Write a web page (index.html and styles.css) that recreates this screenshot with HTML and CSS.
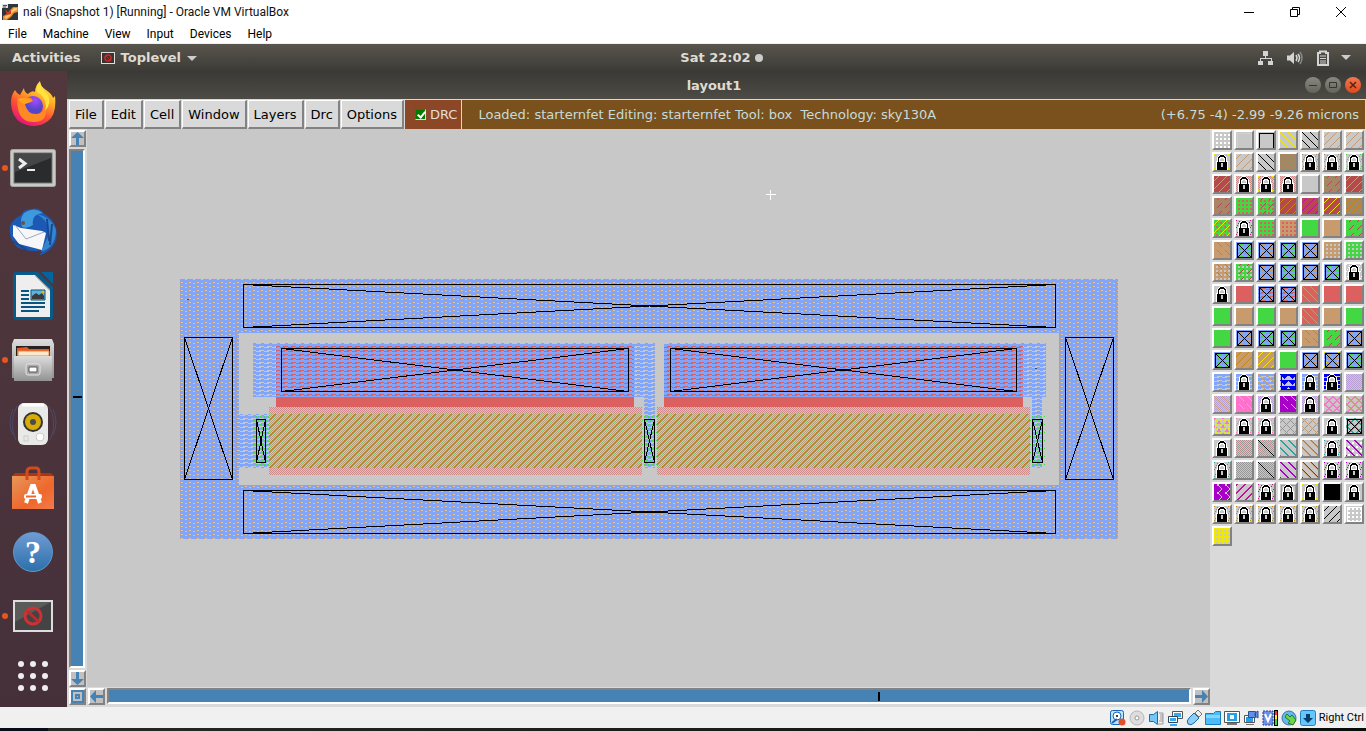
FILE: index.html
```html
<!DOCTYPE html>
<html lang="en">
<head>
<meta charset="utf-8">
<title>nali (Snapshot 1) [Running] - Oracle VM VirtualBox</title>
<link rel="stylesheet" href="styles.css">
</head>
<body>
<div class="vm">
  <header class="vm-title">
    <svg class="vm-logo" width="16" height="16" viewBox="0 0 16 16"><rect width="16" height="16" fill="#30343c"/><path d="M1 16V12L5 10L8 6L11 3H16V8L12 9L9 13L5 16Z" fill="#e8862c"/><path d="M2 13L6 11L9 7L12 4H15V6L11 8L8 12L4 15Z" fill="#ffc36b"/><path d="M3 5L6 8L9 6V10L5 11Z" fill="#d43a1c"/><rect width="6" height="4" fill="#ddd"/><path d="M1 1.500h4M1 3h3" stroke="#555"/></svg>
    <h1 class="vm-name">nali (Snapshot 1) [Running] - Oracle VM VirtualBox</h1>
    <div class="vm-controls">
      <button class="vm-control" aria-label="Minimize"><svg width="12" height="12"><path d="M1 6.500h10" stroke="#000"/></svg></button>
      <button class="vm-control" aria-label="Restore"><svg width="12" height="12" fill="none" stroke="#000"><path d="M1.500 3.500h7v7h-7zM3.500 3V1.500h7v7H9"/></svg></button>
      <button class="vm-control" aria-label="Close"><svg width="12" height="12"><path d="M1 1L11 11M11 1L1 11" stroke="#000"/></svg></button>
    </div>
  </header>
  <nav class="vm-menu">
    <button>File</button><button>Machine</button><button>View</button><button>Input</button><button>Devices</button><button>Help</button>
  </nav>

  <div class="topbar">
    <div class="topbar-left">
      <button class="topbar-item">Activities</button>
      <button class="topbar-item app-item"><svg width="14" height="12"><rect x=".5" y=".5" width="13" height="11" fill="#3a3330" stroke="#ddd"/><circle cx="7" cy="6" r="3" fill="none" stroke="#c22d2d" stroke-width="1.500"/><path d="M5 4l4 4" stroke="#c22d2d"/></svg>Toplevel<svg width="10" height="6"><path d="M0 0h10L5 5z" fill="#ccc"/></svg></button>
    </div>
    <button class="topbar-item clock">Sat 22:02<span class="dot"></span></button>
    <div class="topbar-right">
      <svg width="16" height="16" fill="#d4d4d4"><path d="M5 1h5v5H8v2h6v3h1v4h-5v-4h3V9H3v2h2v4H0v-4h2V8h5V6H5z"/></svg>
      <svg width="16" height="16"><path d="M0 5.500h3L7 2v12L3 10.500H0z" fill="#d4d4d4"/><path d="M9 5q2 3 0 6M11 4q3 4 0 8" fill="none" stroke="#d4d4d4" stroke-width="1.500"/><path d="M13 2q4 6 0 12" fill="none" stroke="#888" stroke-width="1.500"/></svg>
      <svg width="16" height="16"><path d="M4 3V1.500h6V3h2v12H2V3z" fill="none" stroke="#d4d4d4" stroke-width="2"/><path d="M4 6h6M4 8.500h6M4 11h6M4 13h6" stroke="#d4d4d4"/></svg>
      <svg class="menu-arrow" width="10" height="6"><path d="M0 0h10L5 5z" fill="#ccc"/></svg>
    </div>
  </div>

  <div class="desktop">
    <aside class="dock">
      <button class="dock-item" aria-label="Firefox"><svg width="46" height="46" viewBox="0 0 46 46">
        <defs><linearGradient id="ff" x1=".8" y1="0" x2=".3" y2="1"><stop offset="0" stop-color="#fff44f"/><stop offset=".35" stop-color="#ffae27"/><stop offset=".65" stop-color="#ff4f34"/><stop offset="1" stop-color="#e3117f"/></linearGradient><radialGradient id="fp" cx=".6" cy=".2"><stop offset="0" stop-color="#a74bff"/><stop offset="1" stop-color="#5446c8"/></radialGradient></defs>
        <path d="M5 9q2 4 5 5L14 7q0 4 4 6q4-4 7-2Q25 5 30 0q0 5 6 9t7 8l2-2q2 18-7 25T17 44T2 29T5 9Z" fill="url(#ff)"/><circle cx="23" cy="25" r="10" fill="url(#fp)"/><path d="M7 19q8-4 14-2l2 3q-4 2-8 3q2 10 11 10q7 0 9-8q4 15-10 16T8 28z" fill="#ff8a24"/><path d="M7 18q8-3 15 2q-4 2-8 3q-3-1-7-5" fill="#ffa31f"/><path d="M30 1q-7 9 0 12q8 6 5 17q7-8 3-16Q31 8 30 1Z" fill="#ffe23d"/></svg></button>
      <button class="dock-item running" aria-label="Terminal"><svg width="46" height="38"><rect x=".5" y=".5" width="45" height="37" rx="2" fill="#c9c9c6" stroke="#a6a6a2"/><rect x="4" y="4" width="38" height="30" fill="#292b2c" stroke="#777"/><path d="M5 5h36v4L5 23z" fill="#444648"/><path d="M9 10l6 4.500L9 19" fill="none" stroke="#eee" stroke-width="3"/><path d="M17 21h8" stroke="#eee" stroke-width="2"/></svg></button>
      <button class="dock-item" aria-label="Thunderbird"><svg width="48" height="48"><path d="M12 7Q14 1 23 1Q31-1 34 5Q43 9 47 20Q50 34 40 42q-5 5-10 5l5-5Q20 45 8 39Q-1 30 1 18Q3 12 12 7Z" fill="#1b59b5"/><path d="M15 5Q25-2 34 5q-12 1-10 12q-6 4-11 2Q10 11 15 5Z" fill="#3f99dd"/><path d="M4 17L12 20L33 23L37 25L33 42L10 36L4 28Z" fill="#f7f7fa"/><path d="M6 17L17 31L35 24" fill="none" stroke="#9da9b9"/><path d="M27 6q13 6 13 20l-8 18q15-5 15-22Q42 8 27 6" fill="#3485ce"/><path d="M38 11l2 22M43 16l-2 21M4 33l14 9" stroke="#174891" stroke-width="2"/><circle cx="14" cy="15" r="2" fill="#6d5148"/></svg></button>
      <button class="dock-item" aria-label="LibreOffice Writer"><svg width="40" height="48"><path d="M3 0H25L40 15V45q0 3-3 3H3q-3 0-3-3V3Q0 0 3 0" fill="#065b8c"/><path d="M3 3H22L37 18V45H3Z" fill="#eee"/><path d="M22 3V4L37 19V17Z" fill="#999"/><path d="M28 0h12v12z" fill="#05649d"/><path d="M8 19h8M8 23h8M8 27h8M8 31h24M8 35h24M8 39h18" stroke="#075581" stroke-width="2"/><path d="M18 18h14v10H18z" fill="#63b1da" stroke="#075581"/><path d="M19 27v-3l4-3 3 2 3-2 2 3v3z" fill="#373d3d"/><circle cx="30" cy="20" r="1.500" fill="#e3b525"/></svg></button>
      <button class="dock-item running" aria-label="Files"><svg width="42" height="44"><defs><linearGradient id="cab" x2="0" y2="1"><stop stop-color="#ddd"/><stop offset="1" stop-color="#929292"/></linearGradient></defs><path d="M2 1h38l2 5v34H0V6z" fill="url(#cab)"/><path d="M4 8h34v10H4z" fill="#292120"/><path d="M5 10l10-1 2 2h20v7H5z" fill="#e2572b"/><path d="M6 13h31v5H6z" fill="#ffe8c9" stroke="#e48534"/><path d="M2 18h38v25H2z" fill="url(#cab)"/><rect x="14" y="26" width="14" height="11" rx="2" fill="#aaa" stroke="#e6e6e6"/><path d="M17 29h8v5h-8z" fill="#fff" stroke="#555"/></svg></button>
      <button class="dock-item" aria-label="Rhythmbox"><svg width="48" height="46"><path d="M8 5q-9 17-1 34M4 8Q-2 22 4 34M40 5q9 17 1 34M44 8q6 14 0 26" fill="none" stroke="#4c4a66"/><rect x="9" y="2" width="30" height="42" rx="6" fill="#e9e9e7"/><path d="M13 4h22" stroke="#fff" stroke-width="3"/><circle cx="24" cy="21" r="10" fill="#333"/><circle cx="24" cy="21" r="8" fill="#d7ac09"/><circle cx="24" cy="21" r="3" fill="#4b4b48"/><circle cx="31" cy="36" r="4" fill="#fff" stroke="#ccc"/><rect x="15" y="35" width="4" height="5" fill="none" stroke="#ccc"/></svg></button>
      <button class="dock-item" aria-label="Ubuntu Software"><svg width="42" height="44"><defs><linearGradient id="bag" x2="1" y2="1"><stop stop-color="#e7975b"/><stop offset=".6" stop-color="#ef672b"/><stop offset="1" stop-color="#f37b4a"/></linearGradient></defs><path d="M0 10l3-3h36l3 3z" fill="#ad3514"/><path d="M0 10h42v33H0z" fill="url(#bag)"/><path d="M15 14V6q0-4 4-4h5q3 0 3 4v8" fill="none" stroke="#d44b19" stroke-width="3"/><path d="M14 37l6-17h2l6 17" fill="none" stroke="#fff" stroke-width="4"/><rect x="12" y="28" width="18" height="5" rx="2" fill="#fff"/><path d="M14 30.500h10" stroke="#ee682d" stroke-width="2"/></svg></button>
      <button class="dock-item help" aria-label="Help"><span>?</span></button>
      <button class="dock-item running" aria-label="Toplevel"><svg width="40" height="32"><rect x="1" y="1" width="38" height="30" fill="#444" stroke="#ddd" stroke-width="2"/><path d="M2 2h36L2 22z" fill="#5b5b59"/><circle cx="20" cy="16" r="8" fill="none" stroke="#d13132" stroke-width="3"/><path d="M14 11l12 11" stroke="#bd2b2d" stroke-width="3"/></svg></button>
      <button class="dock-item apps" aria-label="Show applications"><svg width="30" height="30" fill="#eee"><circle cx="3" cy="3" r="3"/><circle cx="15" cy="3" r="3"/><circle cx="27" cy="3" r="3"/><circle cx="3" cy="15" r="3"/><circle cx="15" cy="15" r="3"/><circle cx="27" cy="15" r="3"/><circle cx="3" cy="27" r="3"/><circle cx="15" cy="27" r="3"/><circle cx="27" cy="27" r="3"/></svg></button>
    </aside>

    <main class="window">
      <div class="window-title">
        <h2>layout1</h2>
        <div class="window-controls">
          <button aria-label="Minimize window"><svg width="10" height="10"><path d="M1 5.500h8" stroke="#35342f"/></svg></button>
          <button aria-label="Maximize window"><svg width="10" height="10"><path d="M1.500 2.500h7v5h-7z" fill="none" stroke="#35342f"/></svg></button>
          <button class="close" aria-label="Close window"><svg width="10" height="10"><path d="M2 2l6 6M8 2l-6 6" stroke="#5b2413" stroke-width="1.500"/></svg></button>
        </div>
      </div>
      <div class="toolbar">
        <button>File</button><button>Edit</button><button>Cell</button><button>Window</button><button>Layers</button><button>Drc</button><button>Options</button>
        <label class="drc"><input type="checkbox" checked>DRC</label>
        <div class="status"><span>Loaded: starternfet Editing: starternfet Tool: box&nbsp; Technology: sky130A</span><span>(+6.75 -4) -2.99 -9.26 microns</span></div>
      </div>
      <div class="workspace">
        <div class="vscroll">
          <button class="arrow" aria-label="Scroll up"><svg width="13" height="13"><path d="M6.500 0L13 6H8v7H5V6H0z"/></svg></button>
          <div class="trough"><span class="mark"></span></div>
          <button class="arrow" aria-label="Scroll down"><svg width="13" height="13"><path d="M6.500 13L13 7H8V0H5v7H0z"/></svg></button>
        </div>
        <div class="canvas">
          <svg id="layout" viewBox="87 129 1123 558">
            <defs id="stipples"></defs>
            <path d="M180 279H1118V539H180ZM239 333V485H1059V333Z" fill="url(#ring)" fill-rule="evenodd"/>
            <path d="M276 345H634V407H276ZM664 345H1023V407H664Z" fill="#dc6060"/>
            <path d="M253 343H655V397H253ZM664 343H1046V397H664ZM644 397H655V468H644ZM1032 397H1042V468H1032ZM239 414H269V468H239Z" fill="url(#m1)"/>
            <path d="M269 407H642V475H269ZM657 407H1030V475H657Z" fill="url(#poly)"/>
            <path d="M253 414H269V468H253ZM642 414H657V468H642ZM1030 414H1046V468H1030Z" fill="url(#diff)"/>
            <path d="M269 414H642V468H269ZM657 414H1030V468H657Z" fill="#c8c8c8"/>
            <path d="M269 414H642V468H269ZM657 414H1030V468H657Z" fill="url(#gate)"/>
            <path d="M269 414H642V468H269ZM657 414H1030V468H657Z" fill="url(#nfet)"/>
            <path d="M269 414H642V468H269ZM657 414H1030V468H657Z" fill="url(#channel)"/>
            <g id="contacts" fill="none" stroke="#000" shape-rendering="crispEdges"></g>
            <path d="M187 299h2v1h-2zM1035 368h2v1h-2z" fill="#245185"/>
            <path d="M766 194.500h10M770.500 190v10" stroke="#fff"/>
          </svg>
        </div>
        <div class="palette" id="palette"></div>
        <button class="arrow corner" aria-label="Zoom to fit"><svg width="13" height="13"><path d="M0 0h13v13H0zM2 2v9h9V2z" fill-rule="evenodd"/><path d="M4 4h5v5H4zM6 6v1h1V6z" fill-rule="evenodd"/></svg></button>
        <div class="hscroll">
          <button class="arrow" aria-label="Scroll left"><svg width="13" height="13"><path d="M0 6.500L6 0v5h7v3H6v5z"/></svg></button>
          <div class="trough"><span class="mark"></span></div>
          <button class="arrow" aria-label="Scroll right"><svg width="13" height="13"><path d="M13 6.500L7 0v5H0v3h7v5z"/></svg></button>
        </div>
      </div>
    </main>
  </div>

  <footer class="vm-status">
    <svg width="16" height="16"><rect x=".5" y=".5" width="13" height="14" rx="2" fill="#bfe3fb" stroke="#1765b5"/><circle cx="7" cy="6" r="4" fill="#fff" stroke="#1765b5"/><circle cx="7" cy="6" r="1"/><path d="M2 13l5-4" stroke="#1765b5" stroke-width="2"/><circle cx="12" cy="12" r="3.500" fill="#e0502c"/></svg>
    <svg width="16" height="16"><circle cx="8" cy="8" r="7" fill="#ddd" stroke="#b5b5b5"/><circle cx="8" cy="8" r="2" fill="#fff" stroke="#999"/></svg>
    <svg width="16" height="16"><path d="M1.500 4.500h4l4-3v13l-4-3h-4z" fill="#75c8f6" stroke="#176ba9"/><path d="M11 3h4v11h-6M12 5h3M12 7h3M12 9h3M11 11h4" fill="none" stroke="#999"/></svg>
    <svg width="16" height="16"><path d="M5.500 1.500h10v7h-10z" fill="#fff" stroke="#555"/><path d="M7 3h7v4H7z" fill="#36aaf0"/><path d="M1.500 6.500h9v6h-9z" fill="#fff" stroke="#345"/><path d="M3 8h6v3H3zM3 14h7v2H3z" fill="#36aaf0"/></svg>
    <svg width="16" height="16"><path d="M2 14q-2-3 1-6l5-5 5 5-5 5q-3 3-6 1" fill="#8dccf5" stroke="#176bb5"/><path d="M9 3l3-3 4 4-3 3z" fill="#eee" stroke="#777"/></svg>
    <svg width="16" height="16"><path d="M.5 3.500h8l2-2h5v13H.500z" fill="#4bbcf8" stroke="#167dc1"/><path d="M1 5h14v3H1z" fill="#83d6ff"/></svg>
    <svg width="16" height="16"><path d="M.5 1.500h15v11H.500z" fill="#fff" stroke="#555"/><path d="M3 3h10v8H3z" fill="#259fe3"/><path d="M6 5h4v4H6z" fill="#eaf8ff"/><path d="M3 13h10v2H3z" fill="#777"/></svg>
    <svg width="16" height="16"><path d="M1.500 5.500h10v7h-10z" fill="#fff" stroke="#555"/><path d="M3 7h7v5H3z" fill="#259fe3"/><path d="M5.500 1.500h7v6h-7zM12 3l3-2v7l-3-2z" fill="#668ee1" stroke="#29519f"/><path d="M3 14h8v1H3z" fill="#777"/></svg>
    <svg width="16" height="16"><rect x="1" y="1" width="10" height="14" fill="#6991e5" stroke="#2f3c9c" stroke-dasharray="2 1"/><path d="M3 4l3 7 3-7" fill="none" stroke="#fff" stroke-width="2"/><path d="M12 0h4v16h-4z"/><path d="M13 1h2v4h-2z" fill="#f33"/><path d="M13 5h2v4h-2z" fill="#fe2"/><path d="M13 9h2v6h-2z" fill="#3d3"/></svg>
    <svg width="16" height="16"><circle cx="8" cy="8" r="7" fill="#64b7ef" stroke="#3877ac"/><path d="M6 4l3 3 2-2 4 5-3 5-5-2 2-2-5-4z" fill="#6bd64c" stroke="#247b20"/></svg>
    <svg width="16" height="16"><rect x=".5" y=".5" width="15" height="15" rx="2" fill="#64c6fb" stroke="#2280bf"/><path d="M6 4h4v4h3l-5 5-5-5h3z" fill="#063d6b"/></svg>
    <span>Right Ctrl</span>
  </footer>
  <div class="taskbar-edge"></div>
</div>
<script src="app.js"></script>
</body>
</html>
```
FILE: styles.css
```css
* { box-sizing: border-box; }
body { margin: 0; background: #000; overflow: hidden; }
button { font: inherit; color: inherit; background: none; border: 0; padding: 0; margin: 0; }
h1, h2 { margin: 0; font: inherit; }
svg { display: block; flex: none; }

.vm { display: flex; flex-direction: column; height: 100vh; font-family: Roboto, sans-serif; font-size: 12px; }
.vm-title { display: flex; align-items: center; height: 23px; padding: 0 2px; gap: 5px; background: #fff; }
.vm-name { flex: 1; color: #111; }
.vm-controls { display: flex; }
.vm-control { width: 46px; height: 20px; display: grid; place-items: center; }
.vm-menu { display: flex; height: 21px; padding: 2px 0 0 8px; gap: 16px; background: #fff; border-bottom: 1px solid #f0f0f0; color: #000; }

.topbar { display: grid; grid-template-columns: 1fr auto 1fr; align-items: center; height: 27px; padding: 0 15px 0 12px; background: linear-gradient(#58554c, #3c3b37); color: #dfdbd2; font: bold 13px "DejaVu Sans", sans-serif; }
.topbar-left, .topbar-right { display: flex; align-items: center; }
.topbar-left { gap: 20px; }
.topbar-right { justify-content: flex-end; gap: 13px; }
.topbar-item { display: flex; align-items: center; gap: 6px; white-space: nowrap; }
.clock { gap: 4px; padding-left: 80px; }
.app-item svg:last-child { margin-top: 2px; }
.menu-arrow { margin-left: -4px; }
.dot { width: 8px; height: 8px; border-radius: 50%; background: #ccc; }

.desktop { flex: 1; display: flex; min-height: 0; }
.dock { width: 67px; flex: none; padding: 1px 1px 0 0; background: linear-gradient(#52383d, #45303a); display: flex; flex-direction: column; }
.dock-item { position: relative; height: 64px; display: grid; place-items: center; }
.dock-item.apps { height: 55px; }
.running::before { content: ""; position: absolute; left: 2px; top: 29px; width: 6px; height: 6px; border-radius: 50%; background: #e95420; }
.help span { width: 40px; height: 40px; border-radius: 50%; border: 1px solid #6398ce; background: linear-gradient(#6e9bd3, #2d70ab); color: #fff; font: bold 32px/38px "Liberation Serif", serif; text-align: center; }

.window { flex: 1; display: flex; flex-direction: column; min-width: 0; background: #d9d9d9; font-family: "DejaVu Sans", sans-serif; font-size: 13px; }
.window-title { display: grid; grid-template-columns: 1fr auto 1fr; align-items: center; height: 28px; padding-right: 5px; background: linear-gradient(#3a3935, #4d4b45); color: #dfdbd2; font-weight: bold; }
.window-title h2 { grid-column: 2; }
.window-controls { display: flex; justify-content: flex-end; gap: 4px; }
.window-controls button { width: 16px; height: 16px; border-radius: 50%; display: grid; place-items: center; background: linear-gradient(#8a8880, #65635c); }
.window-controls .close { background: linear-gradient(#f37750, #df4a1b); }

.toolbar { display: flex; gap: 1px; height: 30px; padding: 1px 1px 0 2px; background: #d9d9d9; }
.toolbar button { padding: 0 5px; background: #d9d9d9; border: solid; border-color: #fff #828282 #828282 #fff; color: #000; white-space: nowrap; border-width: 1px 2px 2px 1px; }
.drc { display: flex; align-items: center; gap: 4px; padding: 0 4px 0 10px; background: #8b4726; color: #e5dfda; }
.drc input { appearance: none; width: 11px; height: 11px; margin: 0; background: #007d00; border: 1px solid; border-color: #555 #ddd #ddd #555; position: relative; }
.drc input::after { content: ""; position: absolute; left: 3px; top: 0; width: 3px; height: 6px; border: solid #fff; border-width: 0 2px 2px 0; transform: rotate(40deg); }
.status { flex: 1; display: flex; align-items: center; justify-content: space-between; padding: 0 6px 0 16px; background: #7a501d; color: #c4dcdc; white-space: nowrap; min-width: 0; }

.workspace { flex: 1; min-height: 0; display: grid; grid-template-columns: 20px 1fr 156px; grid-template-rows: 1fr 20px; }
.vscroll { display: flex; flex-direction: column; gap: 1px; padding: 1px 1px 0 2px; }
.hscroll { display: flex; gap: 1px; padding: 1px 0 2px 1px; }
.arrow { width: 17px; height: 17px; flex: none; display: grid; place-items: center; background: #c0c0c0; border: 2px solid; border-color: #fff #828282 #828282 #fff; }
.arrow svg { fill: #4682b4; }
.corner { margin: 1px 0 0 2px; }
.trough { flex: 1; position: relative; background: #4682b4; border: 2px solid; border-color: #828282 #fff #fff #828282; }
.vscroll .trough { margin: 1px 1px 1px 0; }
.hscroll .trough { margin: 0 1px 1px 1px; }
.mark { position: absolute; background: #000; }
.vscroll .mark { left: 2px; width: 9px; height: 2px; top: calc(48% - 2px); }
.hscroll .mark { top: 2px; height: 9px; width: 2px; left: calc(71% + 2px); }
.canvas { background: #c8c8c8; min-width: 0; min-height: 0; }
.canvas svg { width: 100%; height: 100%; }
.palette { grid-row: 1 / 3; grid-column: 3; display: grid; grid-template-columns: repeat(7, 20px); align-content: start; gap: 2px; padding: 1px 2px; }
.swatch { width: 20px; height: 20px; border: 2px solid; border-color: #fff #828282 #828282 #fff; background: #c8c8c8; }

.vm-status { display: flex; align-items: center; justify-content: flex-end; gap: 3px; height: 21px; padding-right: 2px; background: #f0f0f0; color: #000; font-size: 11px; white-space: nowrap; }
.taskbar-edge { height: 3px; background: linear-gradient(90deg, #090b18 48px, #262626 48px, #1c1c1c 50%, #080c08); }
```
FILE: app.js
```js
const NS = "http://www.w3.org/2000/svg";
const C = {
  gray: "#c8c8c8", white: "#ffffff", black: "#000000", yellow: "#f0e800", tan: "#c89b6e", green: "#43d743",
  red: "#b84850", coral: "#dc6060", brown: "#aa8466", magenta: "#c0109a", orange: "#c08610", blue: "#80a5fa",
  navy: "#0000f0", lilac: "#b9a0d4", pink: "#ff72cb", purple: "#a800c8", teal: "#2aa39b", dgray: "#969696", moss: "#8a9458",
  rose: "#cc8c8c"
};

const PATTERNS = {
  dots: (x, y) => (x + 2) % 4 < 2 && (y + 2) % 4 < 2,
  frame: (x, y) => y > 0 && x > 0 && (y === 1 || x === 1 || x === 15),
  back: (x, y) => (x - y + 32) % 8 === 0,
  back2: (x, y) => (x - y + 32) % 8 < 2,
  slash: (x, y) => (x + y) % 8 === 4,
  slash2: (x, y) => (x + y) % 8 < 2,
  dash: (x, y) => (x + y) % 8 === 4 && x % 8 > 2,
  backdash: (x, y) => (x - y + 32) % 8 === 3 && x % 8 > 2,
  diag: (x, y) => x === y,
  check: (x, y) => (x + y) % 2 === 0,
  cross: (x, y) => (x + y) % 8 === 4 || (x - y + 32) % 8 === 0,
  cross2: (x, y) => (x + y) % 8 < 2 || (x - y + 32) % 8 < 2,
  waves: (x, y) => y % 4 < 2 || (y % 4 === 2 ? x % 8 < 3 : x % 8 > 4),
  teeth: (x, y) => Math.abs(x % 8 - 4) + y % 6 < 5,
  box: (x, y) => x > 0 && y > 0 && (x === 1 || x === 15 || y === 1 || y === 15),
  x: (x, y) => x > 0 && y > 0 && (x === 1 || x === 15 || y === 1 || y === 15 || x === y || x + y === 16),
  sparse: (x, y) => (x * 3 + y * 5) % 7 === 0 && (x < 4 || x > 12)
};

const LOCK = [
  "......wwww......", ".....wbbbbw.....", "....wbbbbbbw....", "...wbbwwwwbbw...",
  "...wbwwsswwbw...", "...wbwsssswbw...", "...wbwsssswbw...", "..wwbwwwwwwbww..",
  "..wbbbbbbbbbbw..", "..wbbbbssbbbbw..", "..wbbbbssbbbbw..", "..wbbbbssbbbbw..",
  "..wbbbbssbbbbw..", "..wbbbbbbbbbbw..", "..wbbbbbbbbbbw..", "..wbbbbbbbbbbw.."
];

const ROWS = [
  "gray dots:white|gray frame:yellow|gray frame:black|gray back:yellow|gray back:black|gray slash:tan|gray slash:tan",
  "gray sparse:yellow lock|gray slash:tan|gray back:black|brown back:moss|gray sparse:brown lock|gray sparse:brown lock|gray sparse:green lock",
  "red slash:tan|gray check:rose lock|gray check:rose sparse:yellow lock|gray check:rose lock|gray|brown back:moss dash:red|red slash:tan",
  "brown dash:red|green dots:coral|green dots:coral dash:red|red slash:orange|red slash:magenta|red slash:yellow|brown back:moss slash:orange",
  "green dots:coral slash:yellow|gray sparse:magenta lock|green dots:coral|tan dots:coral|green|tan|green dash:red",
  "tan backdash:brown|green waves:blue x:black|tan waves:blue x:black|green waves:blue x:black|tan waves:blue x:black|tan dots:gray|green dots:gray",
  "tan dots:gray backdash:brown|green dots:gray dash:red|tan waves:blue x:black|green waves:blue x:black|tan waves:blue x:black|green waves:blue x:black|gray sparse:white lock",
  "gray lock|coral|coral waves:blue x:black|coral waves:blue x:black|coral back:tan|coral|coral",
  "green|tan|green|tan|coral back:tan|tan|green",
  "green|tan waves:blue x:black|green waves:blue x:black|green waves:blue x:black|tan backdash:brown|green dash:red|tan waves:blue x:black",
  "green waves:blue x:black|tan slash:orange|tan slash:yellow|green|tan waves:blue x:black|tan waves:blue sparse:yellow x:black|green waves:blue x:black",
  "gray waves:blue|gray waves:blue lock|gray waves:blue back:tan|gray teeth:navy box:navy|gray waves:blue lock|gray waves:navy lock|gray check:lilac",
  "gray check:lilac back:tan|pink backdash:gray|gray check:lilac lock|purple backdash:gray|gray check:lilac lock|gray cross2:pink|gray cross2:pink back:tan",
  "gray cross2:pink dots:yellow frame:yellow|gray sparse:pink lock|gray sparse:pink lock|gray cross:dgray|gray cross:dgray back:tan|gray lock|gray cross2:teal x:black",
  "gray lock|gray check:dgray cross:rose|gray check:dgray cross:rose diag:black|gray back2:teal|gray back2:teal back:tan|gray sparse:teal lock|gray dots:white back2:purple",
  "gray sparse:teal lock|gray check:dgray|gray check:dgray diag:black|gray back2:purple|gray back2:purple back:tan|gray sparse:purple lock|gray sparse:purple lock",
  "purple backdash:gray dash:gray|gray slash2:magenta|gray sparse:magenta lock|gray box:dgray lock|gray sparse:yellow lock|black|gray lock",
  "gray sparse:orange lock|gray sparse:orange lock|gray sparse:orange lock|gray sparse:orange lock|gray sparse:orange lock|gray slash:black|gray box:white dots:white",
  "yellow dots:gray"
];

function pixels(test, width, height) {
  let d = "";
  for (let y = 0; y < height; y++)
    for (let x = 0; x < width; x++)
      if (test(x, y)) d += `M${x} ${y}h1v1h-1z`;
  return d;
}

function add(parent, tag, attrs) {
  const node = document.createElementNS(NS, tag);
  for (const key in attrs) node.setAttribute(key, attrs[key]);
  parent.appendChild(node);
  return node;
}

const palette = document.getElementById("palette");
ROWS.forEach((row, r) => row.split("|").forEach((spec, c) => {
  const [base, ...layers] = spec.split(" ");
  const button = document.createElement("button");
  button.className = "swatch";
  button.setAttribute("aria-label", `Layer ${r * 7 + c + 1}`);
  const svg = add(button, "svg", { width: 16, height: 16 });
  add(svg, "path", { d: "M0 0h16v16H0z", fill: C[base] });
  layers.forEach(layer => {
    if (layer === "lock") {
      [["w", C.white], ["b", C.black], ["s", C.gray]].forEach(([key, fill]) =>
        add(svg, "path", { d: pixels((x, y) => LOCK[y][x] === key, 16, 16), fill }));
    } else {
      const [name, color] = layer.split(":");
      add(svg, "path", { d: pixels(PATTERNS[name], 16, 16), fill: C[color] });
    }
  });
  palette.appendChild(button);
}));

const TILE = 48;
const stipples = document.getElementById("stipples");
const isMetal = PATTERNS.waves;
const STIPPLES = {
  m1: [[isMetal, C.blue]],
  ring: [[isMetal, C.blue], [(x, y) => !isMetal(x, y) && (x + 1) % 4 < 2, C.tan]],
  poly: [[PATTERNS.check, C.rose]],
  diff: [[(x, y) => x % 4 === (y % 8 < 4 ? 0 : 2) && y % 4 === 0, C.green]],
  gate: [[PATTERNS.check, "#b49c84"]],
  nfet: [[(x, y) => (x - y + TILE) % 16 === 0 && y % 2 === 0, "#7cc860"]],
  channel: [[(x, y) => (x + y) % 8 < 2, "#b98a1a"]]
};
for (const id in STIPPLES) {
  const pattern = add(stipples, "pattern", { id, width: TILE, height: TILE, patternUnits: "userSpaceOnUse" });
  STIPPLES[id].forEach(([test, fill]) => add(pattern, "path", { d: pixels(test, TILE, TILE), fill }));
}

const contacts = document.getElementById("contacts");
[
  [243, 284, 1055, 327], [243, 490, 1055, 533], [184, 337, 232, 479], [1065, 337, 1113, 479],
  [281, 348, 628, 391], [670, 348, 1016, 391], [256, 419, 265, 462], [644, 419, 654, 462], [1032, 419, 1042, 462]
].forEach(([x1, y1, x2, y2]) => {
  const [l, t, r, b] = [x1 + 0.5, y1 + 0.5, x2 + 0.5, y2 + 0.5];
  add(contacts, "path", { d: `M${l} ${t}H${r}V${b}H${l}ZL${r} ${b}M${r} ${t}L${l} ${b}` });
});
```
